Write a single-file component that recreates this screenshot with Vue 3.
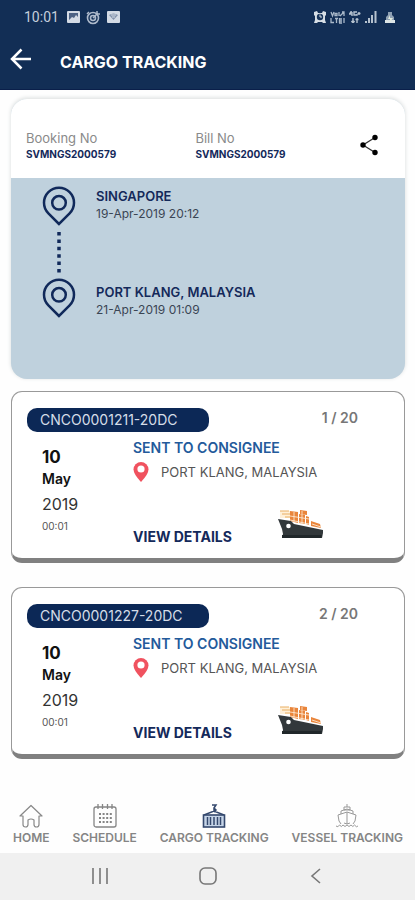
<script setup>
const references = [
  { label: 'Booking No', value: 'SVMNGS2000579' },
  { label: 'Bill No', value: 'SVMNGS2000579' },
]

const stops = [
  { port: 'SINGAPORE', time: '19-Apr-2019 20:12' },
  { port: 'PORT KLANG, MALAYSIA', time: '21-Apr-2019 01:09' },
]

const containers = [
  { id: 'CNCO0001211-20DC', position: '1 / 20' },
  { id: 'CNCO0001227-20DC', position: '2 / 20' },
].map((c) => ({
  ...c,
  day: '10',
  month: 'May',
  year: '2019',
  time: '00:01',
  status: 'SENT TO CONSIGNEE',
  place: 'PORT KLANG, MALAYSIA',
}))
</script>

<template>
  <div class="page">
    <header class="top">
      <div class="status-bar">
        <div class="status-left">
          <span class="clock">10:01</span>
          <svg width="13" height="12" viewBox="0 0 13 12">
            <rect width="13" height="12" rx="1" fill="#d3dae4" />
            <rect x="2" y="2" width="9" height="7" fill="#4c6183" />
            <path d="M2 9l3-3 2 1 2-3 2 2v3z" fill="#d3dae4" />
          </svg>
          <svg width="15" height="15" viewBox="0 0 15 15" fill="none" stroke="#aebacb">
            <circle cx="7" cy="8" r="5.5" stroke-width="1.6" />
            <circle cx="7" cy="8" r="2.5" stroke-width="1.6" />
            <path d="M7 8l5-5M11 1v3h3M1 4l2-2" stroke-width="1.5" />
          </svg>
          <svg width="13" height="12" viewBox="0 0 13 12">
            <rect width="13" height="12" rx="1" fill="#d3dae4" />
            <path d="M2 4q4.500-3 9 0L6.500 9z" fill="#8393ac" />
            <path d="M4 4h5M5 6h3" stroke="#d3dae4" />
          </svg>
        </div>
        <div class="status-right">
          <svg width="12" height="12" viewBox="0 0 12 12">
            <path d="M0 1l3-1 1 2h4l1-2 3 1v3l-1 1v4l1 3H9l-1-1H4l-1 1H0l1-3V5L0 4z" fill="#d6dee5" />
            <circle cx="6" cy="6" r="3.200" fill="#17345b" />
            <path d="M6 3.500V6h2" stroke="#d6dee5" fill="none" />
          </svg>
          <svg width="15" height="13" viewBox="0 0 15 13" fill="none" stroke="#a9b8c9" stroke-width="1.300">
            <path d="M1 1l1.500 4L4 1M5 2.500h2v2H5zM9 1v4M10 5l4-4M12 1h2v4M1 7v4.500h3M5 7.500h3M6.500 7.500V12M9 8h3M9 10h3M9 12h3M9.500 7v5M14 7v5" />
          </svg>
          <svg width="12" height="12" viewBox="0 0 12 12" fill="none" stroke="#b5c2cf" stroke-width="1.400">
            <path d="M2.500 0L.5 3h3M3 1v4M8 1H5v3h3V3M8.500 2.500h3M10 1v3" />
            <path d="M4 7v5M2.500 10L4 12l1.500-2M8 12V7M6.500 8.500h3" />
          </svg>
          <svg width="12" height="12" viewBox="0 0 12 12" fill="#b5c2cf">
            <path d="M0 10h2v2H0zM3 7h2v5H3zM6 4h2v8H6zM9.500 0h2v12h-2z" />
          </svg>
          <svg class="battery" width="10" height="13" viewBox="0 0 10 13">
            <path d="M3 1h4v3l2 2v6H1V6l2-2z" fill="#8ea0b3" />
            <path d="M0 9h10v3H0z" fill="#dce5e6" />
            <path d="M5 4l-2 4h2v3l3-4H5z" fill="#e3ecdf" />
          </svg>
        </div>
      </div>
      <div class="app-bar">
        <button class="icon-button" type="button" aria-label="Back">
          <svg width="22" height="22" viewBox="0 0 22 22" fill="none" stroke="#fff" stroke-width="2.500">
            <path d="M21 11H2M11.500 1.500L2 11l9.500 9.500" />
          </svg>
        </button>
        <h1>CARGO TRACKING</h1>
      </div>
    </header>

    <main>
      <section class="summary">
        <div class="references">
          <div v-for="item in references" :key="item.label" class="reference">
            <span class="reference-label">{{ item.label }}</span>
            <span class="reference-value">{{ item.value }}</span>
          </div>
          <button class="icon-button" type="button" aria-label="Share">
            <svg width="20" height="22" viewBox="0 0 20 22">
              <path d="M16 3.500L4 11l12 7.500" fill="none" stroke="#333" stroke-width="1.300" />
              <circle cx="16" cy="3.500" r="2.700" />
              <circle cx="4" cy="11" r="2.700" />
              <circle cx="16" cy="18.500" r="2.700" />
            </svg>
          </button>
        </div>
        <ol class="route">
          <li v-for="stop in stops" :key="stop.port" class="stop">
            <div class="stop-marker">
              <svg width="34" height="40" viewBox="0 0 34 40" fill="none" stroke="#10295a" stroke-width="2.500">
                <path d="M17 38L6.400 27.400A15 15 0 1 1 27.600 27.400Z" />
                <circle cx="17" cy="16.800" r="6.800" />
              </svg>
              <svg class="dots" width="4" height="44" viewBox="0 0 4 44">
                <path d="M2 2v41" stroke="#10295a" stroke-width="3.500" stroke-dasharray="3.500 3.900" />
              </svg>
            </div>
            <div class="stop-text">
              <strong>{{ stop.port }}</strong>
              <span>{{ stop.time }}</span>
            </div>
          </li>
        </ol>
      </section>

      <article v-for="c in containers" :key="c.id" class="container-card">
        <div class="card-head">
          <h2>{{ c.id }}</h2>
          <span class="position">{{ c.position }}</span>
        </div>
        <div class="card-body">
          <div class="date">
            <span class="day">{{ c.day }}</span>
            <span class="month">{{ c.month }}</span>
            <span class="year">{{ c.year }}</span>
            <span class="time">{{ c.time }}</span>
          </div>
          <div class="info">
            <span class="status">{{ c.status }}</span>
            <div class="place">
              <svg width="16" height="20" viewBox="0 0 16 20">
                <path d="M8 20Q.5 12 .5 7.500a7.500 7.500 0 0115 0Q15.500 12 8 20z" fill="#f0525f" />
                <circle cx="8" cy="7" r="3.600" fill="#fff" />
              </svg>
              <span>{{ c.place }}</span>
            </div>
            <div class="card-foot">
              <a class="details" href="#details">VIEW DETAILS</a>
              <svg class="ship" width="46" height="30" viewBox="0 0 46 30">
                <path d="M3 2h10v7H3z" fill="#fff0d8" />
                <path d="M3 2h9M5 5h8M8 8h6" stroke="#e9ae62" fill="none" />
                <path d="M13 2l8 1v11l-8-2zM22 5l6 1v9l-6-1zM23 1l7 1v4l-7-1zM29 7l3 1v8l-3-1zM34 12l9 3 1 4-10-2z" fill="#e9853b" />
                <path d="M13 7l19 3M13 11l19 4M17 3v10M25 2v13M35 15l9 3" stroke="#fff1df" stroke-width=".8" fill="none" />
                <path d="M1 10l13 2 3 3 29 6v3l-1 5H5l1-4-1-5z" fill="#32383b" />
                <path d="M5 26h40l-1 3H5z" fill="#20272a" />
                <circle cx="11.500" cy="17" r="2.300" fill="#fff" />
              </svg>
            </div>
          </div>
        </div>
      </article>
    </main>

    <nav class="tabs" aria-label="Main">
      <a href="#home">
        <svg width="24" height="24" viewBox="0 0 24 24" fill="none" stroke="#888" stroke-width="1.200" stroke-linejoin="round">
          <path d="M4 12H1L12 1.500 23 12h-3v8.500q0 2.500-2.500 2.500t-2.500-2.500V16q-3-2-6 0v4.500Q9 23 6.500 23T4 20.500z" />
        </svg>
        <span>HOME</span>
      </a>
      <a href="#schedule">
        <svg width="24" height="24" viewBox="0 0 24 24" fill="none" stroke="#858585" stroke-width="1.300">
          <rect x="1" y="3" width="22" height="20" rx="2" />
          <path d="M5 0v5M9.500 0v5M14.500 0v5M19 0v5" />
          <path d="M6 10h13M6 14h13M6 18h13" stroke-width="2" stroke-dasharray="2 1.600" />
        </svg>
        <span>SCHEDULE</span>
      </a>
      <a href="#cargo" aria-current="page">
        <svg width="24" height="24" viewBox="0 0 24 24" fill="none" stroke="#34486d">
          <path d="M10 1h4l-2 3 2 2-2 2M12 4v4M2 11l10-4 10 4" stroke-width="1.500" />
          <rect x="1.500" y="11" width="21" height="12" fill="#c6d5e8" stroke-width="1.600" />
          <path d="M5.500 13v8M8.500 13v8M12 13v8M15.500 13v8M18.500 13v8" stroke-width="1.500" />
        </svg>
        <span>CARGO TRACKING</span>
      </a>
      <a href="#vessel">
        <svg width="24" height="24" viewBox="0 0 24 24" fill="none" stroke="#999">
          <path d="M12 0v3M9 3h6v3H9zM6 10V7l6-2 6 2v3M4 17l-1-6 9-3 9 3-1 6M12 8v12M9 19q3 2 6 0" />
          <path d="M1 22q2 2 3.500-1 2 3 3.500 0 2 3 4 0 2 3 4 0 2 3 3.500 0 2 3 3.500 1M4 17l2 3M20 17l-2 3" />
        </svg>
        <span>VESSEL TRACKING</span>
      </a>
    </nav>

    <div class="system-bar">
      <button type="button" aria-label="Recent apps">
        <svg width="18" height="18" viewBox="0 0 18 18" stroke="#777" stroke-width="1.600">
          <path d="M2 1v16M9 1v16M16 1v16" />
        </svg>
      </button>
      <button type="button" aria-label="Home screen">
        <svg width="18" height="18" viewBox="0 0 18 18" fill="none" stroke="#777" stroke-width="1.600">
          <rect x="1" y="1" width="16" height="16" rx="5" />
        </svg>
      </button>
      <button type="button" aria-label="Go back">
        <svg width="18" height="18" viewBox="0 0 18 18" fill="none" stroke="#777" stroke-width="1.600">
          <path d="M13 2L5 9l8 7" />
        </svg>
      </button>
    </div>
  </div>
</template>

<style>
body {
  margin: 0;
  background: #fff;
}
</style>

<style scoped>
.page {
  display: flex;
  flex-direction: column;
  min-height: 100vh;
  background: #fefefe;
  color: #111;
  font-family: Inter, "Open Sans", sans-serif;
}

svg {
  display: block;
  flex: none;
}

button {
  padding: 0;
  border: 0;
  background: none;
  cursor: pointer;
}

a {
  color: inherit;
  text-decoration: none;
}

.top {
  background: #122e55;
  border-bottom: 1px solid #0a1f4a;
  color: #fff;
}

.status-bar {
  display: flex;
  align-items: center;
  justify-content: space-between;
  height: 34px;
  padding: 0 20px 0 24px;
}

.status-left,
.status-right {
  display: flex;
  align-items: center;
  gap: 6px;
}

.status-right {
  gap: 4px;
}

.battery {
  margin-left: 4px;
}

.clock {
  margin-right: 2px;
  color: #c5cfdc;
  font-family: Roboto, sans-serif;
  font-size: 14px;
}

.app-bar {
  display: flex;
  align-items: center;
  gap: 28px;
  height: 55px;
  padding: 0 10px;
}

.app-bar .icon-button {
  padding-bottom: 6px;
}

h1 {
  margin: 0;
  font-size: 16px;
  font-weight: 700;
}

main {
  display: flex;
  flex-direction: column;
  padding: 9px 10px 24px 11px;
}

.summary {
  margin-bottom: 12px;
  border-radius: 16px;
  background: #bfd1dd;
  overflow: hidden;
  box-shadow: 0 -1px 4px #d8dcdc;
}

.references {
  display: flex;
  align-items: center;
  height: 79px;
  padding: 0 26px 0 15px;
  background: #fff;
}

.reference {
  display: flex;
  flex: 0 0 48%;
  flex-direction: column;
  padding-top: 14px;
}

.references .icon-button {
  margin-left: auto;
  padding-top: 12px;
}

.reference + .reference {
  flex: 1;
}

.reference-label {
  color: #8a8a8a;
  font-size: 13px;
  line-height: 16px;
}

.reference-value {
  color: #14295a;
  font-size: 10px;
  font-weight: 700;
  line-height: 16px;
}

.route {
  margin: 0;
  padding: 8px 31px 9px;
  list-style: none;
}

.stop {
  display: flex;
  gap: 20px;
}

.stop-marker {
  display: flex;
  flex-direction: column;
  align-items: center;
  gap: 4px;
  height: 92px;
}

.stop:last-child .dots {
  display: none;
}

.stop-text {
  display: flex;
  flex-direction: column;
  padding-top: 2px;
  font-size: 12px;
  line-height: 17px;
}

.stop + .stop .stop-text {
  padding-top: 6px;
}

.stop-text strong {
  color: #14295a;
  font-size: 13px;
  font-weight: 600;
}

.stop-text span {
  color: #3a4554;
}

.container-card {
  padding: 16px 15px 10px;
  border: 1px solid #999;
  border-bottom: 5px solid #808080;
  border-radius: 11px;
  background: #fff;
}

.container-card + .container-card {
  margin-top: 24px;
}

.card-head {
  display: flex;
  justify-content: space-between;
  padding-right: 31px;
}

h2 {
  box-sizing: border-box;
  min-width: 55%;
  margin: 0;
  padding: 0 13px;
  border-radius: 10px;
  background: #0c2856;
  color: #d5dde8;
  font-size: 14px;
  font-weight: 400;
  line-height: 24px;
  white-space: nowrap;
}

.position {
  color: #777;
  font-size: 14px;
  font-weight: 600;
  line-height: 20px;
}

.card-body {
  display: flex;
  padding: 6px 0 0 15px;
}

.date {
  display: flex;
  flex: 0 0 91px;
  flex-direction: column;
  padding: 8px 0 14px;
  line-height: 22px;
}

.day {
  font-size: 17px;
  font-weight: 700;
}

.month {
  font-size: 14px;
  font-weight: 600;
}

.year {
  color: #333;
  font-size: 16px;
  line-height: 28px;
}

.time {
  color: #555;
  font-size: 10px;
  line-height: 16px;
}

.info {
  display: flex;
  flex: 1;
  flex-direction: column;
  gap: 2px;
}

.status {
  color: #235a9b;
  font-size: 14px;
  font-weight: 600;
  line-height: 20px;
}

.place {
  display: flex;
  align-items: center;
  gap: 12px;
  height: 24px;
  color: #555;
  font-size: 13px;
}

.card-foot {
  display: flex;
  align-items: flex-end;
  justify-content: space-between;
  margin-top: auto;
  padding-right: 66px;
}

.details {
  color: #14295a;
  font-size: 14px;
  font-weight: 700;
  line-height: 22px;
}

.ship {
  margin-bottom: 9px;
}

.tabs {
  display: flex;
  justify-content: space-between;
  margin-top: auto;
  padding: 0 12px 8px 13px;
}

.tabs a {
  display: flex;
  flex-direction: column;
  align-items: center;
  gap: 2px;
  color: #858585;
  font-size: 12px;
  font-weight: 600;
  line-height: 15px;
}

.system-bar {
  display: flex;
  justify-content: center;
  gap: 90px;
  padding: 14px 0 15px;
  background: #f0f0f0;
}
</style>
